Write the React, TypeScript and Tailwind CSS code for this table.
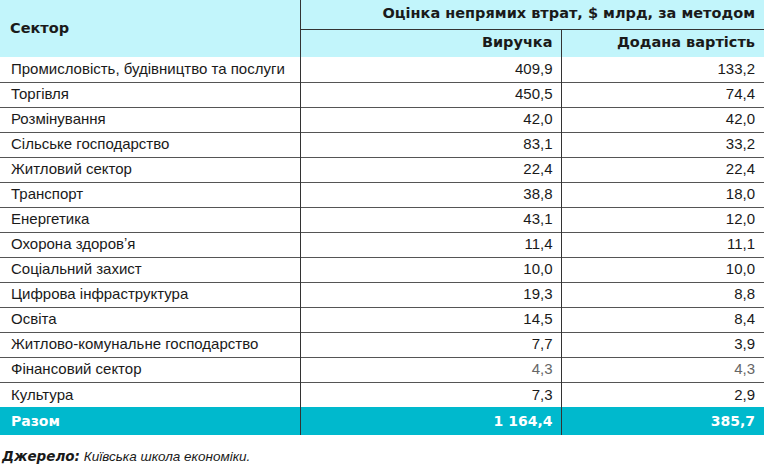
const rows: [string, string, string, boolean?][] = [
  ['Промисловість, будівництво та послуги', '409,9', '133,2'],
  ['Торгівля', '450,5', '74,4'],
  ['Розмінування', '42,0', '42,0'],
  ['Сільське господарство', '83,1', '33,2'],
  ['Житловий сектор', '22,4', '22,4'],
  ['Транспорт', '38,8', '18,0'],
  ['Енергетика', '43,1', '12,0'],
  ['Охорона здоровʼя', '11,4', '11,1'],
  ['Соціальний захист', '10,0', '10,0'],
  ['Цифрова інфраструктура', '19,3', '8,8'],
  ['Освіта', '14,5', '8,4'],
  ['Житлово-комунальне господарство', '7,7', '3,9'],
  ['Фінансовий сектор', '4,3', '4,3', true],
  ['Культура', '7,3', '2,9'],
];

const heavy = 'font-["DejaVu_Sans",sans-serif] font-bold';

export default function App() {
  return (
    <div className="w-[764px] h-[468px] bg-white text-[#1a1a1a] font-['Liberation_Sans',Arial,sans-serif]">
      <table className="w-full border-collapse table-fixed text-[15px]">
        <colgroup>
          <col className="w-[300px]" />
          <col className="w-[261px]" />
          <col />
        </colgroup>
        <thead className={`bg-[#c2f5fb] text-[14.5px] ${heavy}`}>
          <tr className="h-[29px]">
            <th rowSpan={2} className="text-left pl-[10px] border-r border-[#333] align-middle">Сектор</th>
            <th colSpan={2} className="text-right pr-[9px] border-b border-[#333]">Оцінка непрямих втрат, $ млрд, за методом</th>
          </tr>
          <tr className="h-[28px]">
            <th className="text-right pr-[8px] border-r border-[#333]">Виручка</th>
            <th className="text-right pr-[9px]">Додана вартість</th>
          </tr>
        </thead>
        <tbody>
          {rows.map(([name, a, b, muted], i) => (
            <tr key={name} className={`h-[25px] ${i > 0 ? 'border-t border-[#555]' : ''}`}>
              <td className="pl-[11px] border-r border-[#333] whitespace-nowrap">{name}</td>
              <td className={`text-right pr-[8px] border-r border-[#333] ${muted ? 'text-[#666]' : ''}`}>{a}</td>
              <td className={`text-right pr-[9px] ${muted ? 'text-[#666]' : ''}`}>{b}</td>
            </tr>
          ))}
          <tr className={`h-[28px] bg-[#00b9cd] text-white text-[14px] ${heavy}`}>
            <td className="pl-[11px] border-r border-[#333]">Разом</td>
            <td className="text-right pr-[8px] border-r border-[#333]">1 164,4</td>
            <td className="text-right pr-[9px]">385,7</td>
          </tr>
        </tbody>
      </table>
      <div className="pt-[11px] pl-[2px] text-[13.5px] italic">
        <span className={heavy}>Джерело:</span> Київська школа економіки.
      </div>
    </div>
  );
}
